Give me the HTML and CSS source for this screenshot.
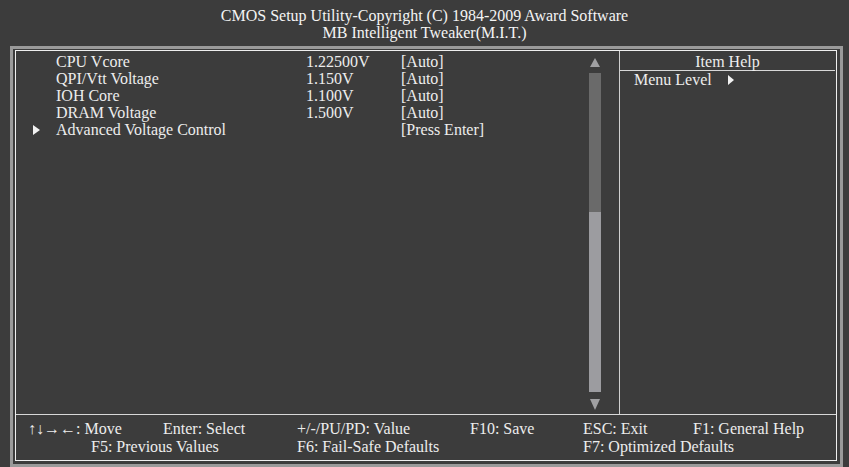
FILE: index.html
```html
<!DOCTYPE html>
<html lang="en">
    <head>
        <meta charset="UTF-8" />
        <meta name="viewport" content="width=device-width, initial-scale=1.0" />
        <title>MB Intelligent Tweaker(M.I.T.)</title>

        <link rel="stylesheet" href="styles.css">
    </head>
    <body>
        <div class="screen">
            <header class="title">
                <div>CMOS Setup Utility-Copyright (C) 1984-2009 Award Software</div>
                <div>MB Intelligent Tweaker(M.I.T.)</div>
            </header>

            <div class="frame">
                <div class="panel">
                    <div class="main">
                        <div class="items">
                            <div class="row">
                                <span class="mark"></span>
                                <span>CPU Vcore</span>
                                <span>1.22500V</span>
                                <span>[Auto]</span>
                            </div>
                            <div class="row">
                                <span class="mark"></span>
                                <span>QPI/Vtt Voltage</span>
                                <span>1.150V</span>
                                <span>[Auto]</span>
                            </div>
                            <div class="row">
                                <span class="mark"></span>
                                <span>IOH Core</span>
                                <span>1.100V</span>
                                <span>[Auto]</span>
                            </div>
                            <div class="row">
                                <span class="mark"></span>
                                <span>DRAM Voltage</span>
                                <span>1.500V</span>
                                <span>[Auto]</span>
                            </div>
                            <div class="row">
                                <span class="mark">
                                    <svg width="7" height="10" viewBox="0 0 7 10"><polygon points="0,0 7,5 0,10" fill="#f2f2f2"/></svg>
                                </span>
                                <span>Advanced Voltage Control</span>
                                <span></span>
                                <span>[Press Enter]</span>
                            </div>
                        </div>

                        <div class="scroll">
                            <svg class="arrow" width="12" height="9" viewBox="0 0 12 9"><polygon points="6,0 11,9 1,9" /></svg>
                            <div class="track">
                                <div class="thumb"></div>
                            </div>
                            <svg class="arrow" width="12" height="11" viewBox="0 0 12 11"><polygon points="1,0 11,0 6,11" /></svg>
                        </div>

                        <div class="help">
                            <div class="help-title">Item Help</div>
                            <div class="help-body">
                                Menu Level
                                <svg width="6" height="10" viewBox="0 0 6 10"><polygon points="0,0 6,5 0,10" fill="#f2f2f2"/></svg>
                            </div>
                        </div>
                    </div>

                    <div class="keys">
                        <span>↑↓→←: Move</span>
                        <span>Enter: Select</span>
                        <span>+/-/PU/PD: Value</span>
                        <span>F10: Save</span>
                        <span>ESC: Exit</span>
                        <span>F1: General Help</span>
                        <span class="f5">F5: Previous Values</span>
                        <span class="f6">F6: Fail-Safe Defaults</span>
                        <span class="f7">F7: Optimized Defaults</span>
                    </div>
                </div>
            </div>
        </div>
    </body>
</html>
```

FILE: styles.css
```css
* {
    margin: 0;
    padding: 0;
    box-sizing: border-box;
}
html {
    font-family: 'Liberation Serif', 'Times New Roman', serif;
    font-size: 16px;
}
body {
    background: #3c3c3c;
    color: #ededed;
    line-height: 17px;
}
.screen {
    width: 849px;
    height: 467px;
    background: #3c3c3c;
}
.title {
    height: 46px;
    padding-top: 7px;
    text-align: center;
    color: #f4f4f4;
}
.frame {
    height: 421px;
    margin: 0 6px 0 10px;
    border: 3px solid #9a9a9a;
    padding: 1px 3px 3px 2px;
}
.panel {
    height: 100%;
    border: 1px solid #efefef;
    display: flex;
    flex-direction: column;
}
.main {
    height: 363px;
    display: flex;
}
.items {
    width: 573px;
    padding: 2px 0 0 16px;
}
.row {
    display: grid;
    grid-template-columns: 24px 250px 95px auto;
    height: 17px;
}
.mark {
    display: flex;
    align-items: center;
    padding-left: 1px;
}
.scroll {
    width: 12px;
    margin-right: 18px;
    padding-top: 7px;
    display: flex;
    flex-direction: column;
}
.arrow {
    display: block;
    fill: #a0a0a2;
}
.track {
    height: 319px;
    margin: 6px 0 7px;
    background: #6a6a6a;
    display: flex;
    flex-direction: column;
    justify-content: flex-end;
}
.thumb {
    height: 180px;
    background: #9c9ca0;
}
.help {
    flex: 1;
    border-left: 1px solid #d0d0d0;
}
.help-title {
    height: 20px;
    margin-right: 1px;
    padding-top: 2px;
    text-align: center;
    border-bottom: 1px solid #d8d8d8;
}
.help-body {
    padding-left: 14px;
    display: flex;
    align-items: center;
    gap: 16px;
}
.keys {
    flex: 1;
    border-top: 1px solid #d8d8d8;
    padding: 5px 0 0 12px;
    display: grid;
    grid-template-columns: 135px 134px 173px 113px 110px 1fr;
    grid-auto-rows: 18px;
    line-height: 18px;
}
.keys .f5 {
    grid-column: 1 / 3;
    padding-left: 63px;
}
.keys .f6 {
    grid-column: 3 / 5;
}
.keys .f7 {
    grid-column: 5 / 7;
}
```
